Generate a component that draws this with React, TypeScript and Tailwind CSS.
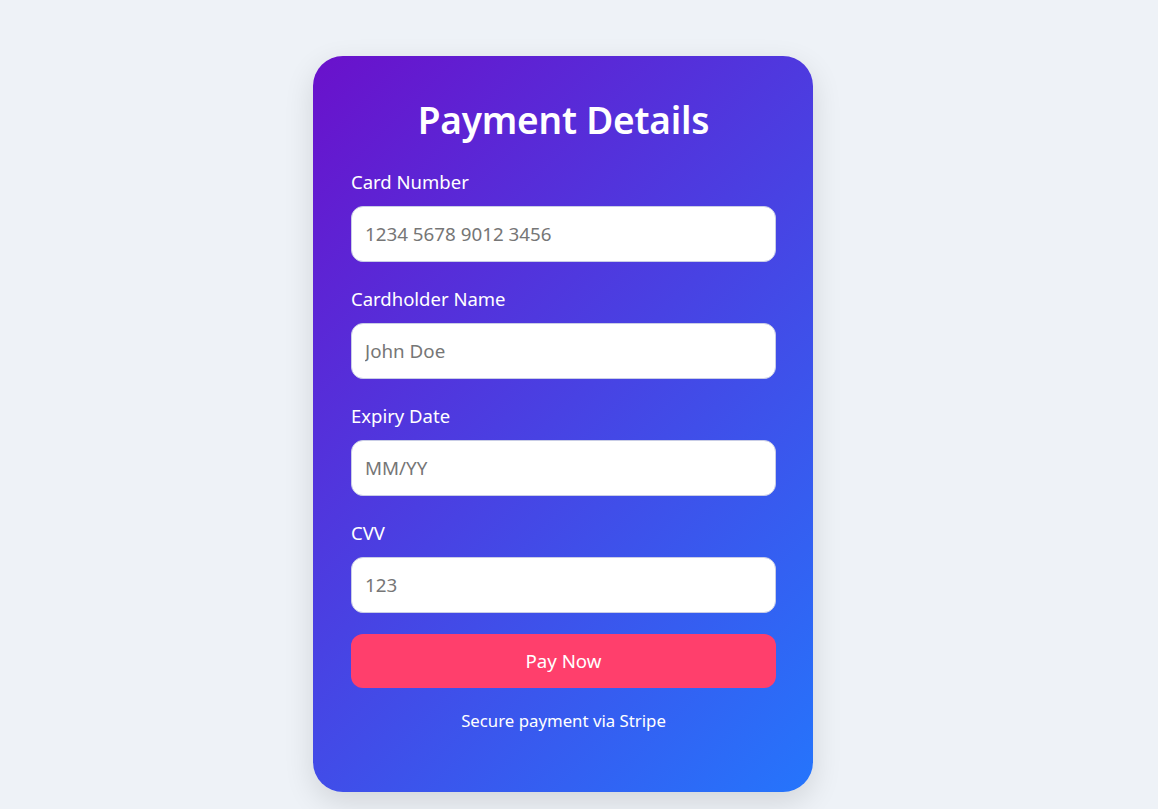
export default function App() {
  const fields = [
    { label: "Card Number", placeholder: "1234 5678 9012 3456" },
    { label: "Cardholder Name", placeholder: "John Doe" },
    { label: "Expiry Date", placeholder: "MM/YY" },
    { label: "CVV", placeholder: "123" },
  ];

  return (
    <div
      className="min-h-screen bg-[#eef2f7] pt-[56px] pl-[313px]"
      style={{ fontFamily: '"Noto Sans", "Open Sans", sans-serif' }}
    >
      <div className="w-[500px] h-[736px] rounded-[30px] bg-[linear-gradient(135deg,#6a11cb,#2575fc)] pl-[38px] pr-[37px] pt-[40px] text-white shadow-[0_10px_30px_rgba(0,0,0,0.12)]">
        {/* Title */}
        <h1 className="text-center text-[37px] leading-[48px] font-semibold mb-[24px] tracking-[-0.2px]">
          Payment Details
        </h1>

        {/* Fields */}
        {fields.map((f) => (
          <div key={f.label} className="mb-[23px]">
            <label className="block text-[18.5px] leading-[27px] mb-[11px]">{f.label}</label>
            <input
              type="text"
              placeholder={f.placeholder}
              className="w-full h-[56px] rounded-[12px] border border-[#c9cde6] bg-white px-[13px] text-[18.8px] text-gray-800 placeholder:text-[#767676] outline-none"
            />
          </div>
        ))}

        <button className="w-full h-[54px] mt-[-2px] rounded-[12px] bg-[#ff3f6c] text-[18.7px] text-white">
          Pay Now
        </button>

        <p className="mt-[20px] text-center text-[16.8px] leading-[25px]">Secure payment via Stripe</p>
      </div>
    </div>
  );
}
